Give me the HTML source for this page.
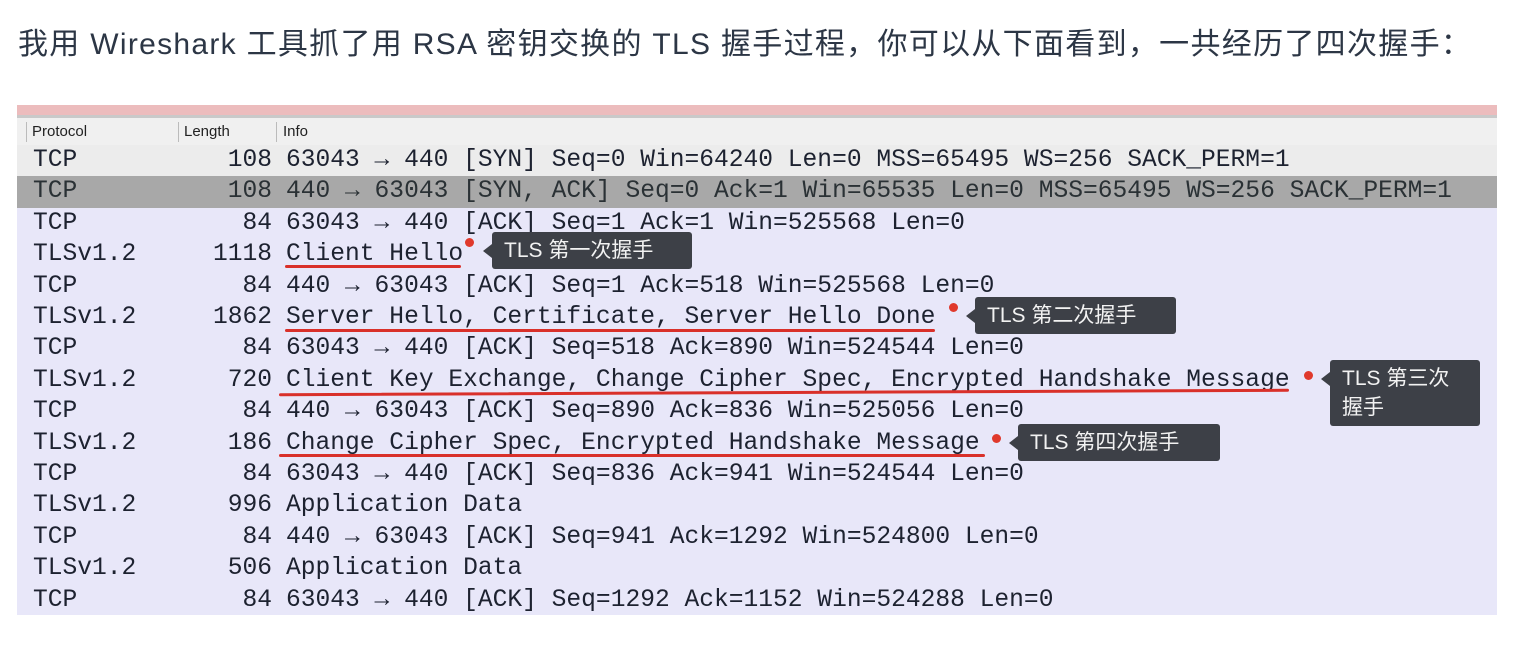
<!DOCTYPE html><html><head><meta charset="utf-8"><style>
body{margin:0;width:1538px;height:646px;background:#fff;position:relative;overflow:hidden;font-family:"Liberation Sans","Noto Sans CJK SC",sans-serif}
.t{position:absolute;left:18px;top:27px;font-size:30px;line-height:36px;color:#2c3645;white-space:nowrap;letter-spacing:1.3px}
.img{position:absolute;left:17px;top:105px;width:1480px;height:510px;background:#e8e7f9;overflow:hidden}
.pink{position:absolute;left:0;top:0;width:100%;height:10px;background:#ecbcbd}
.hl{position:absolute;left:0;top:10px;width:100%;height:3px;background:#c9c9c9}
.hd{position:absolute;left:0;top:13px;width:100%;height:27px;background:#f0f0f0;font-size:15px;color:#222}
.hd span{position:absolute;top:5px}
.hd i{position:absolute;top:4px;width:1px;height:20px;background:#bbb}
.r{position:absolute;left:0;width:100%;height:31.4px;font-family:"Liberation Mono","DejaVu Sans Mono",monospace;font-size:24.6px;color:#1d2230;white-space:pre;line-height:31.4px}
.r b{font-weight:normal;position:absolute}
.p{left:16px}.l{right:1225px;text-align:right}.i{left:269px}
.ul{position:absolute;height:2.5px;background:#d9302a;border-radius:2px}
.dot{position:absolute;width:9px;height:9px;border-radius:50%;background:#e0392c}
.bx{position:absolute;background:#3d4047;color:#f2f2f2;font-size:21px;border-radius:3px;padding:4px 12px;line-height:29px;white-space:nowrap}
.bx:before{content:"";position:absolute;left:-9px;top:12px;border:7px solid transparent;border-right:9px solid #3d4047;border-left:0}
</style></head><body>
<div class="t">我用 Wireshark 工具抓了用 RSA 密钥交换的 TLS 握手过程，你可以从下面看到，一共经历了四次握手：</div>
<div class="img">
<div class="pink"></div><div class="hl"></div>
<div class="hd"><i style="left:9px"></i><span style="left:15px">Protocol</span><i style="left:161px"></i><span style="left:167px">Length</span><i style="left:259px"></i><span style="left:266px">Info</span></div>
<div class="r" style="top:40px;background:#ececec"><b class="p">TCP</b><b class="l">108</b><b class="i">63043 → 440 [SYN] Seq=0 Win=64240 Len=0 MSS=65495 WS=256 SACK_PERM=1</b></div>
<div class="r" style="top:71.4px;background:#a8a8a8;color:#2a3135"><b class="p">TCP</b><b class="l">108</b><b class="i">440 → 63043 [SYN, ACK] Seq=0 Ack=1 Win=65535 Len=0 MSS=65495 WS=256 SACK_PERM=1</b></div>
<div class="r" style="top:102.8px"><b class="p">TCP</b><b class="l">84</b><b class="i">63043 → 440 [ACK] Seq=1 Ack=1 Win=525568 Len=0</b></div>
<div class="r" style="top:134.2px"><b class="p">TLSv1.2</b><b class="l">1118</b><b class="i">Client Hello</b></div>
<div class="r" style="top:165.6px"><b class="p">TCP</b><b class="l">84</b><b class="i">440 → 63043 [ACK] Seq=1 Ack=518 Win=525568 Len=0</b></div>
<div class="r" style="top:197px"><b class="p">TLSv1.2</b><b class="l">1862</b><b class="i">Server Hello, Certificate, Server Hello Done</b></div>
<div class="r" style="top:228.4px"><b class="p">TCP</b><b class="l">84</b><b class="i">63043 → 440 [ACK] Seq=518 Ack=890 Win=524544 Len=0</b></div>
<div class="r" style="top:259.8px"><b class="p">TLSv1.2</b><b class="l">720</b><b class="i">Client Key Exchange, Change Cipher Spec, Encrypted Handshake Message</b></div>
<div class="r" style="top:291.2px"><b class="p">TCP</b><b class="l">84</b><b class="i">440 → 63043 [ACK] Seq=890 Ack=836 Win=525056 Len=0</b></div>
<div class="r" style="top:322.6px"><b class="p">TLSv1.2</b><b class="l">186</b><b class="i">Change Cipher Spec, Encrypted Handshake Message</b></div>
<div class="r" style="top:354px"><b class="p">TCP</b><b class="l">84</b><b class="i">63043 → 440 [ACK] Seq=836 Ack=941 Win=524544 Len=0</b></div>
<div class="r" style="top:385.4px"><b class="p">TLSv1.2</b><b class="l">996</b><b class="i">Application Data</b></div>
<div class="r" style="top:416.8px"><b class="p">TCP</b><b class="l">84</b><b class="i">440 → 63043 [ACK] Seq=941 Ack=1292 Win=524800 Len=0</b></div>
<div class="r" style="top:448.2px"><b class="p">TLSv1.2</b><b class="l">506</b><b class="i">Application Data</b></div>
<div class="r" style="top:479.6px"><b class="p">TCP</b><b class="l">84</b><b class="i">63043 → 440 [ACK] Seq=1292 Ack=1152 Win=524288 Len=0</b></div>

<div class="ul" style="left:268px;top:160px;width:176px"></div>
<div class="ul" style="left:268px;top:224px;width:650px"></div>
<div class="ul" style="left:262px;top:286px;width:1010px;transform:rotate(-0.25deg)"></div>
<div class="ul" style="left:262px;top:349px;width:706px"></div>
<div class="dot" style="left:448px;top:133px"></div>
<div class="dot" style="left:932px;top:198px"></div>
<div class="dot" style="left:1287px;top:266px"></div>
<div class="dot" style="left:975px;top:329px"></div>
<div class="bx" style="left:475px;top:127px;width:176px">TLS 第一次握手</div>
<div class="bx" style="left:958px;top:192px;width:177px">TLS 第二次握手</div>
<div class="bx" style="left:1313px;top:255px;width:126px">TLS 第三次<br>握手</div>
<div class="bx" style="left:1001px;top:319px;width:178px">TLS 第四次握手</div>
</div>
</body></html>
